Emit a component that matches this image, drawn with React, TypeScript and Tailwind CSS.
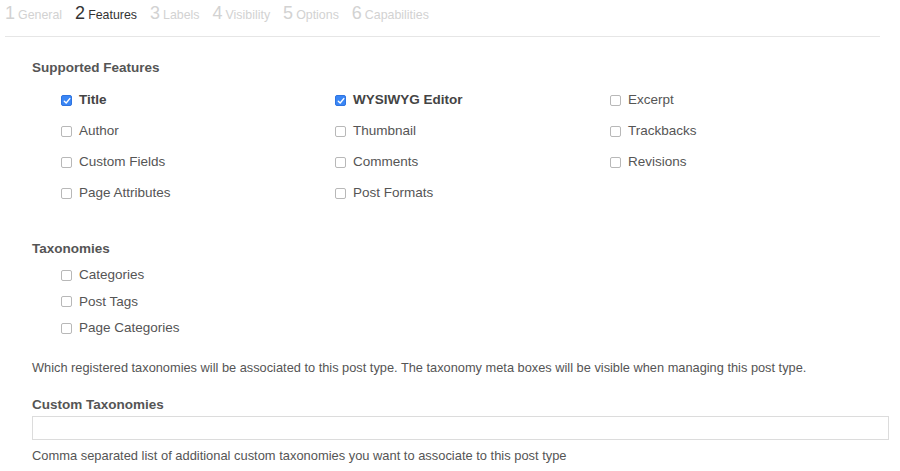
import { useState } from "react";

const tabs = [
  { n: 1, label: "General" },
  { n: 2, label: "Features" },
  { n: 3, label: "Labels" },
  { n: 4, label: "Visibility" },
  { n: 5, label: "Options" },
  { n: 6, label: "Capabilities" },
];

const features = [
  ["Title", "WYSIWYG Editor", "Excerpt"],
  ["Author", "Thumbnail", "Trackbacks"],
  ["Custom Fields", "Comments", "Revisions"],
  ["Page Attributes", "Post Formats", ""],
];

function Check({ label, checked, onToggle }: { label: string; checked: boolean; onToggle: () => void }) {
  return (
    <label className="flex items-center cursor-pointer select-none" onClick={onToggle}>
      <span
        className={
          checked
            ? "w-[11px] h-[11px] rounded-[2px] bg-[#3a86f5] border border-[#2f74e0] flex items-center justify-center"
            : "w-[11px] h-[11px] rounded-[2px] bg-white border border-[#b8b8b8]"
        }
      >
        {checked && (
          <svg width="8" height="8" viewBox="0 0 8 8">
            <path d="M1.3 4.2 L3.2 6 L6.8 1.6" fill="none" stroke="white" strokeWidth="1.4" strokeLinecap="round" strokeLinejoin="round" />
          </svg>
        )}
      </span>
      <span className={checked ? "ml-[7px] font-bold text-[#444]" : "ml-[7px] text-[#555]"}>{label}</span>
    </label>
  );
}

export default function App() {
  const [checked, setChecked] = useState<Record<string, boolean>>({ Title: true, "WYSIWYG Editor": true });
  const toggle = (k: string) => setChecked({ ...checked, [k]: !checked[k] });

  return (
    <div className="bg-white w-[900px] h-[471px] overflow-hidden text-[13.5px] text-[#555]" style={{ fontFamily: '"Liberation Sans", Arial, sans-serif' }}>
      <div className="ml-[5px] w-[875px] h-[37px] border-b border-[#e6e6e6] flex items-start pt-[1px]">
        {tabs.map((t) => (
          <div key={t.n} className={t.n === 2 ? "flex items-baseline mr-[13px] text-[#333]" : "flex items-baseline mr-[13px] text-[#d2d2d2]"}>
            <span className="text-[18px] leading-[24px] mr-[3px]">{t.n}</span>
            <span className="text-[12.4px]">{t.label}</span>
          </div>
        ))}
      </div>

      <div className="pl-[32px]">
        <div className="mt-[21px] font-bold leading-[20px] text-[#555]">Supported Features</div>
        <div className="mt-[7px] pl-[29px] grid grid-cols-[274px_275px_200px]">
          {features.flat().map((f, i) => (
            <div key={i} className="h-[31px] flex items-center">
              {f && <Check label={f} checked={!!checked[f]} onToggle={() => toggle(f)} />}
            </div>
          ))}
        </div>

        <div className="mt-[30px] font-bold leading-[20px]">Taxonomies</div>
        <div className="mt-[3px] pl-[29px]">
          {["Categories", "Post Tags", "Page Categories"].map((f) => (
            <div key={f} className="h-[26.5px] flex items-center">
              <Check label={f} checked={!!checked[f]} onToggle={() => toggle(f)} />
            </div>
          ))}
        </div>

        <p className="mt-[16px] leading-[20px] text-[12.8px]">
          Which registered taxonomies will be associated to this post type. The taxonomy meta boxes will be visible when managing this post type.
        </p>

        <div className="mt-[17px] font-bold leading-[20px]">Custom Taxonomies</div>
        <input type="text" className="mt-[1px] block w-[857px] h-[24px] border border-[#dcdcdc] outline-none px-2 text-[13px]" />
        <p className="mt-[6px] leading-[20px] text-[12.9px]">Comma separated list of additional custom taxonomies you want to associate to this post type</p>
      </div>
    </div>
  );
}
